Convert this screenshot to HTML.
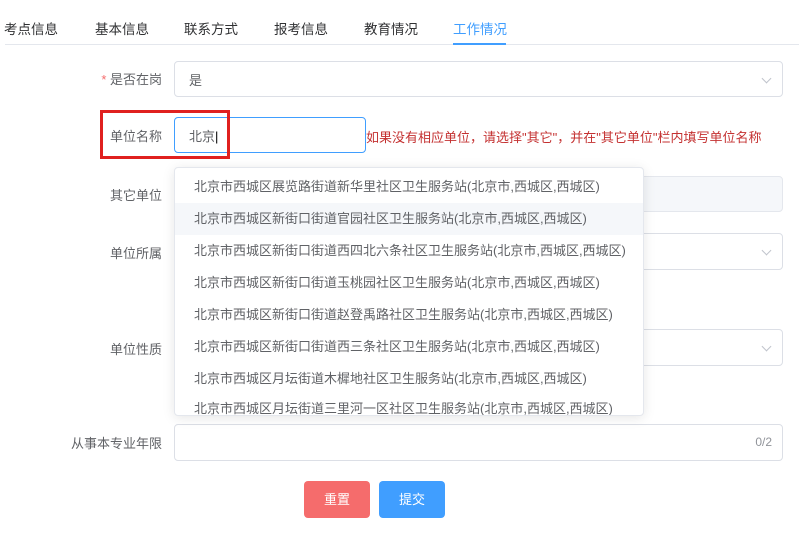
<!DOCTYPE html>
<html><head><meta charset="utf-8"><style>
*{box-sizing:border-box;margin:0;padding:0}
body{width:799px;height:543px;background:#fff;font-family:"Liberation Sans","Noto Sans CJK SC",sans-serif;font-size:13px;color:#606266;position:relative;overflow:hidden}
.a{position:absolute}
.tab{position:absolute;top:18px;font-size:13.5px;color:#303133}
.box{position:absolute;left:174px;width:609px;height:36px;border:1px solid #dcdfe6;border-radius:4px;background:#fff}
.lbl{position:absolute;right:637px;font-size:13px;color:#606266;white-space:nowrap}
.chev{position:absolute;right:12px;top:13px;width:7px;height:7px;border-right:1px solid #c0c4cc;border-bottom:1px solid #c0c4cc;transform:rotate(45deg)}
.dd{position:absolute;left:174px;top:167px;width:470px;height:249px;background:#fff;border:1px solid #e4e7ed;border-radius:4px;box-shadow:0 2px 12px rgba(0,0,0,.1);overflow:hidden}
.it{height:32px;line-height:32px;padding-left:19px;font-size:13px;color:#606266;white-space:nowrap}
</style></head><body>
<div class="tab" style="left:4px">考点信息</div>
<div class="tab" style="left:95px">基本信息</div>
<div class="tab" style="left:184px">联系方式</div>
<div class="tab" style="left:274px">报考信息</div>
<div class="tab" style="left:364px">教育情况</div>
<div class="tab" style="left:453px;color:#409eff">工作情况</div>
<div class="a" style="left:5px;right:0;top:44px;height:1px;background:#e4e7ed"></div>
<div class="a" style="left:453px;width:53px;top:43px;height:2px;background:#409eff"></div>

<div class="lbl" style="top:69px"><span style="color:#f56c6c">*</span> 是否在岗</div>
<div class="box" style="top:61px;height:36px"><span class="a" style="left:14px;top:8px;color:#606266">是</span><div class="chev"></div></div>

<div class="lbl" style="top:126px">单位名称</div>
<div class="box" style="top:117px;width:192px;border-color:#409eff"><span class="a" style="left:14px;top:8px;color:#606266">北京<span style="color:#000">|</span></span></div>
<div class="a" style="left:100px;top:110px;width:130px;height:49px;border:3px solid #e0201f"></div>
<div class="a" style="left:366px;top:127px;color:#c43131;font-size:13px;white-space:nowrap">如果没有相应单位，请选择"其它"，并在"其它单位"栏内填写单位名称</div>

<div class="lbl" style="top:185px">其它单位</div>
<div class="box" style="top:176px;height:36px;background:#f5f7fa;border-color:#e4e7ed"></div>

<div class="lbl" style="top:243px">单位所属</div>
<div class="box" style="top:233px;height:37px"><div class="chev"></div></div>

<div class="lbl" style="top:339px">单位性质</div>
<div class="box" style="top:329px;height:37px"><div class="chev"></div></div>

<div class="lbl" style="top:433px">从事本专业年限</div>
<div class="box" style="top:424px;height:37px"><span class="a" style="right:10px;top:10px;color:#909399;font-size:12px">0/2</span></div>

<div class="a" style="left:304px;top:481px;width:66px;height:37px;background:#f56c6c;border-radius:4px;color:#fff;text-align:center;line-height:37px">重置</div>
<div class="a" style="left:379px;top:481px;width:66px;height:37px;background:#409eff;border-radius:4px;color:#fff;text-align:center;line-height:37px">提交</div>

<div class="dd">
<div class="it" style="margin-top:3px">北京市西城区展览路街道新华里社区卫生服务站(北京市,西城区,西城区)</div>
<div class="it" style="background:#f5f7fa">北京市西城区新街口街道官园社区卫生服务站(北京市,西城区,西城区)</div>
<div class="it">北京市西城区新街口街道西四北六条社区卫生服务站(北京市,西城区,西城区)</div>
<div class="it">北京市西城区新街口街道玉桃园社区卫生服务站(北京市,西城区,西城区)</div>
<div class="it">北京市西城区新街口街道赵登禹路社区卫生服务站(北京市,西城区,西城区)</div>
<div class="it">北京市西城区新街口街道西三条社区卫生服务站(北京市,西城区,西城区)</div>
<div class="it">北京市西城区月坛街道木樨地社区卫生服务站(北京市,西城区,西城区)</div>
<div class="it" style="line-height:28px">北京市西城区月坛街道三里河一区社区卫生服务站(北京市,西城区,西城区)</div>
</div>
</body></html>
